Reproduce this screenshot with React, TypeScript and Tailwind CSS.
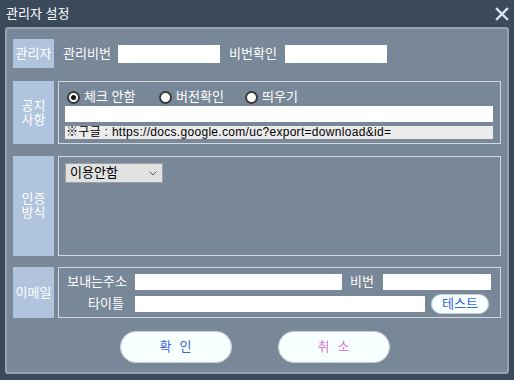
const font = { fontFamily: '"Liberation Sans", "Noto Sans CJK KR", sans-serif' };

function SideLabel({ lines, h }: { lines: string[]; h: string }) {
  return (
    <div
      className={`w-[41px] ${h} shrink-0 bg-[#b0c4de] flex flex-col items-center justify-center text-white text-[13px] leading-[14px]`}
    >
      {lines.map((l) => (
        <span key={l}>{l}</span>
      ))}
    </div>
  );
}

function Radio({ checked, label }: { checked?: boolean; label: string }) {
  return (
    <div className="flex items-center gap-[4px] shrink-0">
      <span className="w-[13px] h-[13px] rounded-full bg-white border-2 border-[#3a3a3a] flex items-center justify-center">
        {checked && <span className="w-[5px] h-[5px] rounded-full bg-[#111]" />}
      </span>
      <span className="text-white text-[13px] leading-[14px] whitespace-pre">{label}</span>
    </div>
  );
}

function PillButton({ label, color, className }: { label: string[]; color: string; className: string }) {
  return (
    <button
      className={`${className} shrink-0 rounded-full bg-[#f8ffff] border border-[#c5ccd3] shadow-[0_0_1px_#9aa] flex items-center justify-center gap-[8px] text-[13px] ${color}`}
    >
      {label.map((c) => (
        <span key={c}>{c}</span>
      ))}
    </button>
  );
}

const label = "shrink-0 whitespace-nowrap text-white text-[13px]";
const field = "min-w-0 bg-white outline-none";

export default function App() {
  return (
    <div className="w-[514px] h-[380px] bg-[#3b4a5a] flex flex-col" style={font}>
      <div className="h-[27px] px-[6px] flex items-center justify-between shrink-0">
        <span className="text-white text-[13px]">관리자 설정</span>
        <svg width="14" height="14" viewBox="0 0 14 14" className="mr-[-1px]">
          <path d="M2 2 L12 12 M12 2 L2 12" stroke="#dbe5f0" strokeWidth="2.4" strokeLinecap="square" />
        </svg>
      </div>

      <div className="mx-[5px] h-[347px] rounded-[3px] border-2 border-[#97a3ae] bg-[#788898] px-[6px] pt-[10px] flex flex-col">
        {/* 관리자 */}
        <div className="flex items-center">
          <SideLabel lines={["관리자"]} h="h-[29px]" />
          <span className={`ml-[9px] w-[47px] ${label}`}>관리비번</span>
          <input className={`ml-[8px] w-[102px] h-[18px] ${field}`} />
          <span className={`ml-[9px] w-[47px] ${label}`}>비번확인</span>
          <input className={`ml-[9px] w-[102px] h-[18px] ${field}`} />
        </div>

        {/* 공지사항 */}
        <div className="flex mt-[13px] gap-[4px]">
          <SideLabel lines={["공지", "사항"]} h="h-[63px]" />
          <div className="flex-1 min-w-0 h-[63px] border border-[#d4d8dc] pl-[6px] pr-[7px] pt-[8px] flex flex-col">
            <div className="flex items-center pl-[2px]">
              <div className="w-[92px]">
                <Radio checked label="체크 안함" />
              </div>
              <div className="w-[86px]">
                <Radio label="버전확인" />
              </div>
              <Radio label="띄우기" />
            </div>
            <input className={`mt-[2px] h-[16px] w-full ${field}`} />
            <div className="mt-[4px] h-[13px] bg-[#ececec] text-black text-[12px] leading-[13px] tracking-[0.3px] pl-[1px] whitespace-nowrap overflow-hidden">
              ※구글 : https://docs.google.com/uc?export=download&amp;id=
            </div>
          </div>
        </div>

        {/* 인증방식 */}
        <div className="flex mt-[12px] gap-[4px]">
          <SideLabel lines={["인증", "방식"]} h="h-[100px]" />
          <div className="flex-1 min-w-0 h-[100px] border border-[#d4d8dc] pl-[6px] pt-[6px]">
            <div className="w-[98px] h-[20px] bg-[#e1e1e1] border border-[#a0a0a0] flex items-center justify-between pl-[4px] pr-[5px]">
              <span className="text-black text-[13px]">이용안함</span>
              <svg width="8" height="5" viewBox="0 0 8 5">
                <path d="M0.5 0.5 L4 4 L7.5 0.5" stroke="#555" strokeWidth="1" fill="none" />
              </svg>
            </div>
          </div>
        </div>

        {/* 이메일 */}
        <div className="flex mt-[11px] gap-[4px]">
          <SideLabel lines={["이메일"]} h="h-[51px]" />
          <div className="flex-1 min-w-0 h-[51px] border border-[#d4d8dc] pl-[6px] pr-[9px] pt-[6px] flex flex-col gap-[6px]">
            <div className="flex items-center h-[16px]">
              <span className={`w-[62px] text-right ${label}`}>보내는주소</span>
              <input className={`ml-[8px] w-[207px] h-[16px] ${field}`} />
              <span className={`ml-[8px] w-[25px] ${label}`}>비번</span>
              <input className={`ml-[8px] flex-1 h-[16px] ${field}`} />
            </div>
            <div className="flex items-center h-[16px]">
              <span className={`w-[59px] text-right ${label}`}>타이틀</span>
              <input className={`ml-[11px] w-[290px] h-[16px] ${field}`} />
              <PillButton label={["테스트"]} color="text-[#3a63d8]" className="ml-[6px] w-[58px] h-[20px]" />
            </div>
          </div>
        </div>

        {/* buttons */}
        <div className="flex justify-center gap-[46px] mt-[13px] pr-[5px]">
          <PillButton label={["확", "인"]} color="text-[#3a63d8]" className="w-[112px] h-[32px]" />
          <PillButton label={["취", "소"]} color="text-[#d873d8]" className="w-[112px] h-[32px]" />
        </div>
      </div>
    </div>
  );
}
